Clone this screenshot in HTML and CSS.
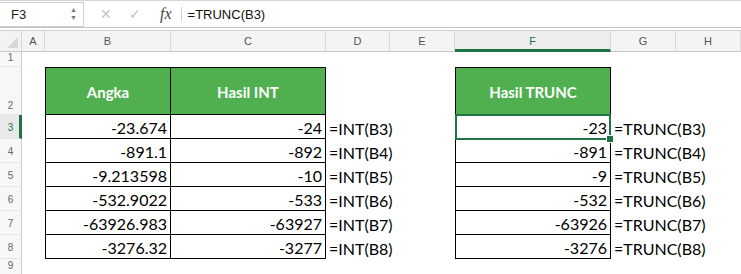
FILE: index.html
```html
<!DOCTYPE html>
<html lang="id">

<head>
    <meta charset="UTF-8">
    <title>INT vs TRUNC</title>
    <link rel="stylesheet" href="styles.css">
</head>

<body>
    <div class="fbar">
        <div class="namebox">
            <span class="ref">F3</span>
            <span class="spin"><span>&#9650;</span><span>&#9660;</span></span>
        </div>
        <div class="fbtns">
            <span class="btn-x">&#10005;</span>
            <span class="btn-ok">&#10003;</span>
            <span class="btn-fx">fx</span>
        </div>
        <div class="formula">=TRUNC(B3)</div>
    </div>

    <div class="sheet">
        <div class="row r-hdr">
            <div class="corner"></div>
            <div class="colh">A</div>
            <div class="colh">B</div>
            <div class="colh">C</div>
            <div class="colh">D</div>
            <div class="colh">E</div>
            <div class="colh colh-active">F</div>
            <div class="colh">G</div>
            <div class="colh">H</div>
        </div>
        <div class="row r-1">
            <div class="rowh">1</div>
            <div></div><div></div><div></div><div></div><div></div><div></div><div></div><div></div>
        </div>
        <div class="row r-2">
            <div class="rowh">2</div>
            <div></div>
            <div class="cell head tb tl tt">Angka</div>
            <div class="cell head tb tt">Hasil INT</div>
            <div></div>
            <div></div>
            <div class="cell head tb tl tt">Hasil TRUNC</div>
            <div></div>
            <div></div>
        </div>
        <div class="row r-data">
            <div class="rowh rowh-active">3</div>
            <div></div>
            <div class="cell num tb tl">-23.674</div>
            <div class="cell num tb">-24</div>
            <div class="cell txt">=INT(B3)</div>
            <div></div>
            <div class="cell num tb tl selected">-23</div>
            <div class="cell txt">=TRUNC(B3)</div>
            <div></div>
        </div>
        <div class="row r-data">
            <div class="rowh">4</div>
            <div></div>
            <div class="cell num tb tl">-891.1</div>
            <div class="cell num tb">-892</div>
            <div class="cell txt">=INT(B4)</div>
            <div></div>
            <div class="cell num tb tl">-891</div>
            <div class="cell txt">=TRUNC(B4)</div>
            <div></div>
        </div>
        <div class="row r-data">
            <div class="rowh">5</div>
            <div></div>
            <div class="cell num tb tl">-9.213598</div>
            <div class="cell num tb">-10</div>
            <div class="cell txt">=INT(B5)</div>
            <div></div>
            <div class="cell num tb tl">-9</div>
            <div class="cell txt">=TRUNC(B5)</div>
            <div></div>
        </div>
        <div class="row r-data">
            <div class="rowh">6</div>
            <div></div>
            <div class="cell num tb tl">-532.9022</div>
            <div class="cell num tb">-533</div>
            <div class="cell txt">=INT(B6)</div>
            <div></div>
            <div class="cell num tb tl">-532</div>
            <div class="cell txt">=TRUNC(B6)</div>
            <div></div>
        </div>
        <div class="row r-data">
            <div class="rowh">7</div>
            <div></div>
            <div class="cell num tb tl">-63926.983</div>
            <div class="cell num tb">-63927</div>
            <div class="cell txt">=INT(B7)</div>
            <div></div>
            <div class="cell num tb tl">-63926</div>
            <div class="cell txt">=TRUNC(B7)</div>
            <div></div>
        </div>
        <div class="row r-data">
            <div class="rowh">8</div>
            <div></div>
            <div class="cell num tb tl">-3276.32</div>
            <div class="cell num tb">-3277</div>
            <div class="cell txt">=INT(B8)</div>
            <div></div>
            <div class="cell num tb tl">-3276</div>
            <div class="cell txt">=TRUNC(B8)</div>
            <div></div>
        </div>
        <div class="row r-9">
            <div class="rowh">9</div>
            <div></div><div></div><div></div><div></div><div></div><div></div><div></div><div></div>
        </div>
    </div>
</body>

</html>
```

FILE: styles.css
```css
* {
    box-sizing: border-box;
}

body {
    margin: 0;
    width: 741px;
    height: 274px;
    overflow: hidden;
    background-color: #fff;
    font-family: "Liberation Sans", Arial, sans-serif;
}

/* formula bar */

.fbar {
    display: flex;
    align-items: center;
    height: 28px;
    border-top: 1px solid #d6d6d6;
    border-bottom: 1px solid #c4c4c4;
    background-color: #fff;
}

.namebox {
    display: flex;
    align-items: center;
    justify-content: space-between;
    width: 85px;
    height: 25px;
    margin-left: -1px;
    padding: 0 6px 0 11px;
    border: 1px solid #cfcfcf;
    font-size: 13px;
    color: #222;
}

.spin {
    display: flex;
    flex-direction: column;
    font-size: 7px;
    line-height: 8px;
    color: #777;
}

.fbtns {
    display: flex;
    align-items: center;
    height: 100%;
    padding-left: 16px;
}

.btn-x,
.btn-ok {
    font-size: 14px;
    color: #c2c2c2;
    margin-right: 17px;
}

.btn-ok {
    margin-right: 19px;
}

.btn-fx {
    font-family: "Liberation Serif", serif;
    font-style: italic;
    font-size: 16px;
    color: #444;
    padding-right: 9px;
    border-right: 1px solid #d0d0d0;
    line-height: 14px;
}

.formula {
    padding-left: 6px;
    font-size: 13px;
    color: #111;
}

/* sheet grid */

.sheet {
    margin-top: 2px;
    border-top: 1px solid #cfcfcf;
}

.row {
    display: grid;
    grid-template-columns: 22px 23px 126px 155px 64px 65px 156px 65px 65px;
}

.r-hdr {
    height: 21px;
}

.r-1 {
    height: 15px;
}

.r-2 {
    height: 48px;
}

.r-data {
    height: 24px;
}

.r-9 {
    height: 16px;
}

.corner {
    position: relative;
    background-color: #f3f3f3;
    border-right: 1px solid #d4d4d4;
    border-bottom: 1px solid #c6c6c6;
}

.corner::after {
    content: "";
    position: absolute;
    right: 3px;
    bottom: 3px;
    width: 0;
    height: 0;
    border-left: 11px solid transparent;
    border-bottom: 11px solid #d8d8d8;
}

.colh {
    display: flex;
    align-items: center;
    justify-content: center;
    background-color: #f4f4f4;
    border-right: 1px solid #dadada;
    border-bottom: 1px solid #c6c6c6;
    font-size: 11px;
    color: #555;
}

.colh-active {
    background-color: #ededed;
    border-bottom: 3px solid #217346;
    color: #217346;
    padding-top: 2px;
}

.rowh {
    display: flex;
    align-items: flex-end;
    justify-content: center;
    padding-bottom: 3px;
    background-color: #f7f7f7;
    border-right: 1px solid #cdcdcd;
    border-bottom: 1px solid #e6e6e6;
    font-size: 10px;
    color: #666;
}

.r-data .rowh {
    align-items: center;
    padding: 2px 0 0;
}

.rowh-active {
    background-color: #e9e9e9;
    border-right: 3px solid #217346;
    color: #217346;
    padding-left: 2px !important;
}

/* cells */

.cell {
    display: flex;
    align-items: center;
    font-family: Lato, "Liberation Sans", sans-serif;
    font-size: 16px;
    color: #000;
    white-space: nowrap;
}

.head {
    justify-content: center;
    background-color: #50b050;
    color: #fff;
    font-weight: bold;
    font-size: 15px;
    padding-top: 2px;
}

.num {
    justify-content: flex-end;
    padding: 2px 3px 0 0;
}

.txt {
    padding: 2px 0 0 3px;
    overflow: visible;
}

.tb {
    border-right: 1px solid #000;
    border-bottom: 1px solid #000;
}

.tl {
    border-left: 1px solid #000;
}

.tt {
    border-top: 1px solid #000;
}

.selected {
    position: relative;
}

.selected::before {
    content: "";
    position: absolute;
    left: -1px;
    top: -1px;
    right: -1px;
    bottom: -2px;
    border: 2px solid #217346;
}

.selected::after {
    content: "";
    position: absolute;
    right: -4px;
    bottom: -5px;
    width: 6px;
    height: 6px;
    background-color: #217346;
    border: 1px solid #fff;
}
```
